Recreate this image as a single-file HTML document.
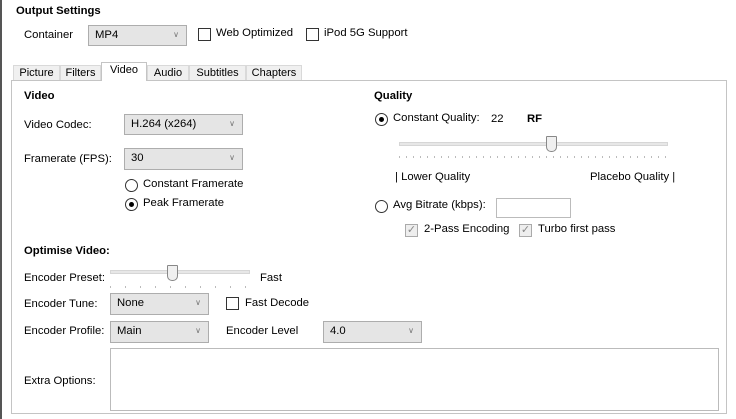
<!DOCTYPE html>
<html><head><style>
body{margin:0;width:736px;height:419px;background:#fff;font-family:"Liberation Sans",sans-serif;font-size:11.3px;color:#000;position:relative;overflow:hidden}
.a{position:absolute;white-space:nowrap}
.b{font-weight:bold}
.combo{position:absolute;background:#e5e5e5;border:1px solid #adadad;box-sizing:border-box}
.combo span{position:absolute;left:6px;top:3px}
.combo i{position:absolute;right:7px;top:4px;font-style:normal;font-size:8px;color:#777}
.cb{position:absolute;width:13px;height:13px;border:1px solid #333;box-sizing:border-box;background:#fff}
.cb.c{border-color:#aaa;background:#eee;color:#888;font-size:11px;line-height:11px;text-align:center}
.rd{position:absolute;width:13px;height:13px;border:1px solid #333;border-radius:50%;box-sizing:border-box;background:#fff}
.rd.on::after{content:"";position:absolute;left:3px;top:3px;width:5px;height:5px;border-radius:50%;background:#000}
.tab{position:absolute;top:65px;height:15px;border:1px solid #d9d9d9;border-bottom:none;background:#f0f0f0;box-sizing:border-box;text-align:center;line-height:14px;font-size:11px}
.track{position:absolute;height:4px;background:#e7e7e7;border:1px solid #d6d6d6;box-sizing:border-box}
.thumb{position:absolute;width:11px;height:16px;background:#f0f0f0;border:1px solid #888;box-sizing:border-box;border-radius:1px 1px 5px 5px}
</style></head><body>
<div class="a" style="left:0;top:0;width:2px;height:419px;background:#555"></div>
<div class="a b" style="left:16px;top:5px">Output Settings</div>
<div class="a" style="left:24px;top:29px">Container</div>
<div class="combo" style="left:88px;top:25px;width:99px;height:21px"><span>MP4</span><i>&#8744;</i></div>
<div class="cb" style="left:198px;top:28px"></div><div class="a" style="left:216px;top:27px">Web Optimized</div>
<div class="cb" style="left:306px;top:28px"></div><div class="a" style="left:324px;top:27px">iPod 5G Support</div>

<div class="a" style="left:11px;top:80px;width:716px;height:334px;border:1px solid #c4c4c4;box-sizing:border-box"></div>
<div class="tab" style="left:13px;width:47px">Picture</div>
<div class="tab" style="left:60px;width:41px">Filters</div>
<div class="tab" style="left:101px;top:62px;height:19px;width:46px;background:#fff;border-color:#c4c4c4">Video</div>
<div class="tab" style="left:147px;width:42px">Audio</div>
<div class="tab" style="left:189px;width:57px">Subtitles</div>
<div class="tab" style="left:246px;width:56px">Chapters</div>

<div class="a b" style="left:24px;top:90px">Video</div>
<div class="a" style="left:24px;top:119px">Video Codec:</div>
<div class="combo" style="left:124px;top:114px;width:119px;height:21px"><span>H.264 (x264)</span><i>&#8744;</i></div>
<div class="a" style="left:24px;top:153px">Framerate (FPS):</div>
<div class="combo" style="left:124px;top:148px;width:119px;height:22px"><span>30</span><i>&#8744;</i></div>
<div class="rd" style="left:125px;top:179px"></div><div class="a" style="left:143px;top:178px">Constant Framerate</div>
<div class="rd on" style="left:125px;top:198px"></div><div class="a" style="left:143px;top:197px">Peak Framerate</div>

<div class="a b" style="left:374px;top:90px">Quality</div>
<div class="rd on" style="left:375px;top:113px"></div><div class="a" style="left:393px;top:112px">Constant Quality:</div>
<div class="a" style="left:491px;top:113px">22</div><div class="a b" style="left:527px;top:113px">RF</div>
<div class="track" style="left:399px;top:142px;width:269px"></div>
<div class="thumb" style="left:546px;top:136px"></div>
<div class="a" style="left:399px;top:156px;width:269px;height:2px;background:repeating-linear-gradient(90deg,#bbb 0 1px,transparent 1px 7px)"></div>
<div class="a" style="left:395px;top:171px">| Lower Quality</div>
<div class="a" style="left:590px;top:171px">Placebo Quality |</div>
<div class="rd" style="left:375px;top:200px"></div><div class="a" style="left:393px;top:199px">Avg Bitrate (kbps):</div>
<div class="a" style="left:496px;top:198px;width:75px;height:20px;border:1px solid #bbb;box-sizing:border-box"></div>
<div class="cb c" style="left:405px;top:224px">&#10003;</div><div class="a" style="left:424px;top:223px">2-Pass Encoding</div>
<div class="cb c" style="left:519px;top:224px">&#10003;</div><div class="a" style="left:538px;top:223px">Turbo first pass</div>

<div class="a b" style="left:24px;top:245px">Optimise Video:</div>
<div class="a" style="left:24px;top:272px">Encoder Preset:</div>
<div class="track" style="left:110px;top:270px;width:140px"></div>
<div class="thumb" style="left:167px;top:265px"></div>
<div class="a" style="left:110px;top:286px;width:140px;height:2px;background:repeating-linear-gradient(90deg,#bbb 0 1px,transparent 1px 15px)"></div>
<div class="a" style="left:260px;top:272px">Fast</div>
<div class="a" style="left:24px;top:298px">Encoder Tune:</div>
<div class="combo" style="left:110px;top:293px;width:99px;height:22px"><span>None</span><i>&#8744;</i></div>
<div class="cb" style="left:226px;top:297px"></div><div class="a" style="left:245px;top:297px">Fast Decode</div>
<div class="a" style="left:24px;top:325px">Encoder Profile:</div>
<div class="combo" style="left:110px;top:321px;width:99px;height:22px"><span>Main</span><i>&#8744;</i></div>
<div class="a" style="left:226px;top:325px">Encoder Level</div>
<div class="combo" style="left:323px;top:321px;width:99px;height:22px"><span>4.0</span><i>&#8744;</i></div>
<div class="a" style="left:110px;top:348px;width:609px;height:63px;border:1px solid #bbb;box-sizing:border-box"></div>
<div class="a" style="left:24px;top:375px">Extra Options:</div>
</body></html>
